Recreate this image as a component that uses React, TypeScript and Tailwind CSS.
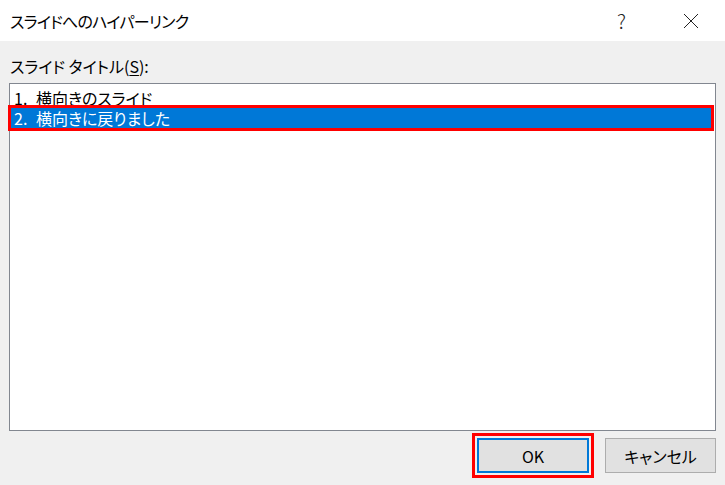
const font = "font-['Noto_Sans_CJK_JP','Noto_Sans',sans-serif] [font-feature-settings:'palt']";

export default function App() {
  return (
    <div className={`flex h-[485px] w-[725px] flex-col bg-[#f0f0f0] text-[16px] text-black ${font}`}>
      <div className="flex h-[41px] items-center bg-white pl-[10px]">
        <span className="flex-1 leading-none tracking-[-0.75px]">スライドへのハイパーリンク</span>
        <span className="mr-[57px] text-[20px] font-light leading-none text-[#222]">?</span>
        <svg width="16" height="16" viewBox="0 0 16 16" className="mr-[26px]">
          <path d="M1 1 L15 15 M15 1 L1 15" stroke="#222" strokeWidth="1" fill="none" />
        </svg>
      </div>

      <div className="flex flex-1 flex-col px-[9px]">
        <div className="flex h-[42px] items-end pb-[9px] pl-[1px] leading-none">
          スライド タイトル(<span className="underline underline-offset-2">S</span>):
        </div>

        <div className="flex h-[348px] flex-col border border-[#828790] bg-white pt-[4px] pl-[1px] pr-[4px]">
          <div className="flex h-[20px] items-center pl-[3px] leading-none [word-spacing:5px]">1. 横向きのスライド</div>
          <div className="flex h-[20px] items-center bg-[#0078d7] pl-[3px] leading-none text-white outline-[3px] outline-[#ff0000] outline-solid [word-spacing:5px]">
            2. 横向きに戻りました
          </div>
        </div>

        <div className="mt-[7px] flex justify-end gap-[16px]">
          <button className="flex h-[35px] w-[112px] items-center justify-center border-2 border-[#0078d7] bg-[#e1e1e1] leading-none outline-[3px] outline-offset-[2px] outline-[#ff0000] outline-solid">
            OK
          </button>
          <button className="flex h-[35px] w-[111px] items-center justify-center border border-[#adadad] bg-[#e1e1e1] leading-none">
            キャンセル
          </button>
        </div>
      </div>
    </div>
  );
}
